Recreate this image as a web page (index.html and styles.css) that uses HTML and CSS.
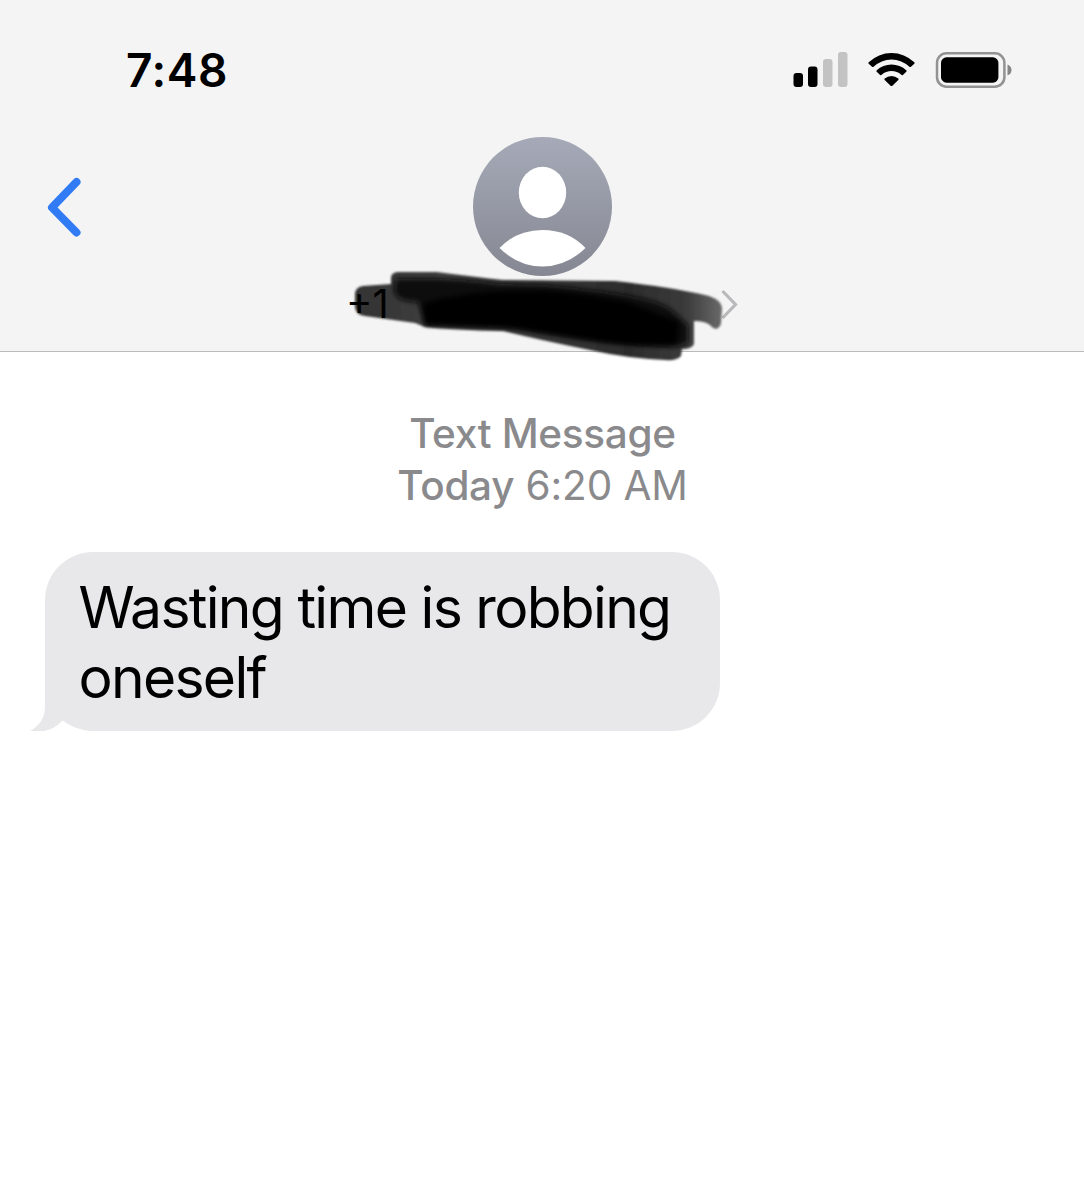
FILE: index.html
```html
<!DOCTYPE html>
<html lang="en">
<head>
    <meta charset="UTF-8">
    <meta name="viewport" content="width=device-width, initial-scale=1.0">
    <title>Messages</title>
    <link rel="stylesheet" href="styles.css">
</head>
<body>
    <header>
        <div class="status">
            <span class="time">7:48</span>
            <svg class="signal" width="55" height="36" viewBox="0 0 55 36">
                <rect x="0.500" y="21" width="9.5" height="14" rx="3"/>
                <rect x="15" y="14.5" width="9.5" height="20.5" rx="3"/>
                <rect x="30" y="7" width="9.5" height="28" rx="3" fill="#c3c3c3"/>
                <rect x="45" y="0" width="9.5" height="35" rx="3" fill="#c3c3c3"/>
            </svg>
            <svg class="wifi" width="47" height="36" viewBox="0 0 47 36">
                <path d="M0.7 10.2 A33 33 0 0 1 46.3 10.2 Q47 11 46.3 11.7 L43 14.8 Q42.2 15.4 41.4 14.7 A26 26 0 0 0 5.6 14.7 Q4.8 15.4 4 14.8 L0.7 11.7 Q0 11 0.7 10.2 Z"/>
                <path d="M8.7 18.2 A21.8 21.8 0 0 1 38.3 18.2 Q39 19 38.3 19.7 L34.9 22.9 Q34.2 23.5 33.3 22.8 A14.8 14.8 0 0 0 13.7 22.8 Q12.8 23.5 12.1 22.9 L8.7 19.7 Q8 19 8.7 18.2 Z"/>
                <path d="M16.7 26.4 A10.5 10.5 0 0 1 30.3 26.4 Q31 27.2 30.3 27.9 L24.4 33.7 Q23.5 34.5 22.6 33.7 L16.7 27.9 Q16 27.2 16.7 26.4 Z"/>
            </svg>
            <svg class="battery" width="77" height="36" viewBox="0 0 77 36">
                <rect x="2" y="1.3" width="67.4" height="33.4" rx="9.5" fill="none" stroke="#929292" stroke-width="2.5"/>
                <rect x="6" y="5.3" width="57.4" height="25.4" rx="5.5"/>
                <path d="M72.500 12.5 Q76.500 14 76.500 18 T72.500 23.5 Z" fill="#858585"/>
            </svg>
        </div>
        <div class="contact">
            <svg class="back" width="36" height="60" viewBox="0 0 36 60">
                <path d="M30.5 5 L6 30.5 L30.500 55.5" fill="none" stroke="#317bf4" stroke-width="8" stroke-linecap="round" stroke-linejoin="round"/>
            </svg>
            <svg class="avatar" width="140" height="140" viewBox="0 0 140 140">
                <defs>
                    <linearGradient id="grey" x1="0" y1="0" x2="0" y2="1">
                        <stop offset="0" stop-color="#a6aab8"/>
                        <stop offset="1" stop-color="#858892"/>
                    </linearGradient>
                </defs>
                <circle cx="70.5" cy="69.5" r="69.5" fill="url(#grey)"/>
                <ellipse cx="70.5" cy="55.5" rx="23.7" ry="25.8" fill="#fff"/>
                <path d="M27.5 111 Q44.5 93 70.5 93 T113.500 111 Q94.5 129.5 70.5 129.5 T27.5 111 Z" fill="#fff"/>
            </svg>
        </div>
        <div class="number">
            <!-- marker strokes over the number -->
            <svg class="marker" width="400" height="110" viewBox="340 260 400 110">
                <defs>
                    <filter id="soft" x="-5%" y="-20%" width="110%" height="140%">
                        <feGaussianBlur stdDeviation="1.3"/>
                    </filter>
                    <filter id="softer" x="-5%" y="-20%" width="110%" height="140%">
                        <feGaussianBlur stdDeviation="2.5"/>
                    </filter>
                    <linearGradient id="ink" x1="0" y1="0" x2="1" y2="0">
                        <stop offset="0" stop-color="#333"/>
                        <stop offset="0.25" stop-color="#404040"/>
                        <stop offset="0.75" stop-color="#2c2c2c"/>
                        <stop offset="0.9" stop-color="#3a3a3a"/>
                        <stop offset="1" stop-color="#6a6a6a"/>
                    </linearGradient>
                </defs>
                <path d="M355 293 Q356 287 363 286 L391 284 L391 277 Q392 272 399 272 L437 272 Q475 277 503 280 L615 281 Q670 287 705 295 Q722 299 722 309 L721 324 Q717 333 710 325 Q705 321 694 321 L694 344 Q692 349 682 349 L681 356 Q677 361 665 360 Q625 358 590 350 Q540 340 503 331 Q455 330 425 327 L415 323 L365 316 Q353 315 355 301 Z" fill="url(#ink)" filter="url(#soft)"/>
                <path d="M396 279 Q448 277 500 284 L545 285 Q610 291 640 298 Q668 304 676 314 L688 325 L688 343 L676 347 Q610 345 520 328 L425 324 L418 302 Q395 302 394 290 Z" fill="#0a0a0a" filter="url(#softer)"/>
                <path d="M423 303 Q480 288 548 291 Q600 295 630 303 L679 322 L677 344 Q640 348 590 340 L505 327 L425 325 Z" fill="#000" filter="url(#softer)"/>
            </svg>
            <span class="prefix">+1</span>
            <svg width="18" height="32" viewBox="0 0 18 32">
                <path d="M2.5 3 L15.5 16.5 L2.5 30" fill="none" stroke="#b9b9bb" stroke-width="3.2"/>
            </svg>
        </div>
    </header>
    <main>
        <div class="stamp">
            <b>Text Message</b><br>
            <b class="today">Today</b> <span>6:20 AM</span>
        </div>
        <div class="bubble">
            Wasting time is robbing<br>
            oneself
            <svg class="tail" width="50" height="60" viewBox="0 0 50 60">
                <path d="M15 0 L15 34 Q15 51 0 59 Q20 62 32 49 L50 40 L50 0 Z" fill="#e8e8ea"/>
            </svg>
        </div>
    </main>
</body>
</html>
```

FILE: styles.css
```css
body {
    margin: 0;
    font-family: 'Inter', sans-serif;
    background-color: #fff;
    color: #000;
}

svg {
    display: block;
    flex-shrink: 0;
}

header {
    height: 352px;
    box-sizing: border-box;
    background-color: #f4f4f4;
    border-bottom: 1px solid #bbbbbd;
}

.status {
    display: flex;
    align-items: center;
    height: 137px;
    box-sizing: border-box;
    padding: 3px 72px 0 126px;
}

.time {
    font-size: 46px;
    font-weight: 600;
    letter-spacing: 0.6px;
    margin-right: auto;
}

.wifi {
    margin: 0 20px;
}

.contact {
    display: grid;
    grid-template-columns: 1fr 140px 1fr;
    align-items: center;
    height: 140px;
}

.back {
    margin-left: 46px;
}

.number {
    position: relative;
    display: flex;
    align-items: center;
    justify-content: space-between;
    height: 53px;
    padding: 0 346px;
    font-size: 40px;
}

.prefix {
    z-index: 1;
}

.marker {
    position: absolute;
    left: 340px;
    top: -17px;
}

.stamp {
    padding: 56px 0 0 1px;
    text-align: center;
    font-size: 40.5px;
    line-height: 52px;
    letter-spacing: -0.1px;
    color: #8a8a8d;
}

.stamp b {
    font-weight: 500;
    letter-spacing: -0.3px;
}

.bubble {
    position: relative;
    width: 675px;
    height: 179px;
    box-sizing: border-box;
    margin: 40px 0 0 44.5px;
    padding: 21px 0 0 34px;
    border-radius: 48px;
    background-color: #e8e8ea;
    font-size: 57px;
    line-height: 70px;
    letter-spacing: -1.7px;
    white-space: nowrap;
}

.tail {
    position: absolute;
    left: -15px;
    bottom: -1px;
}
```
